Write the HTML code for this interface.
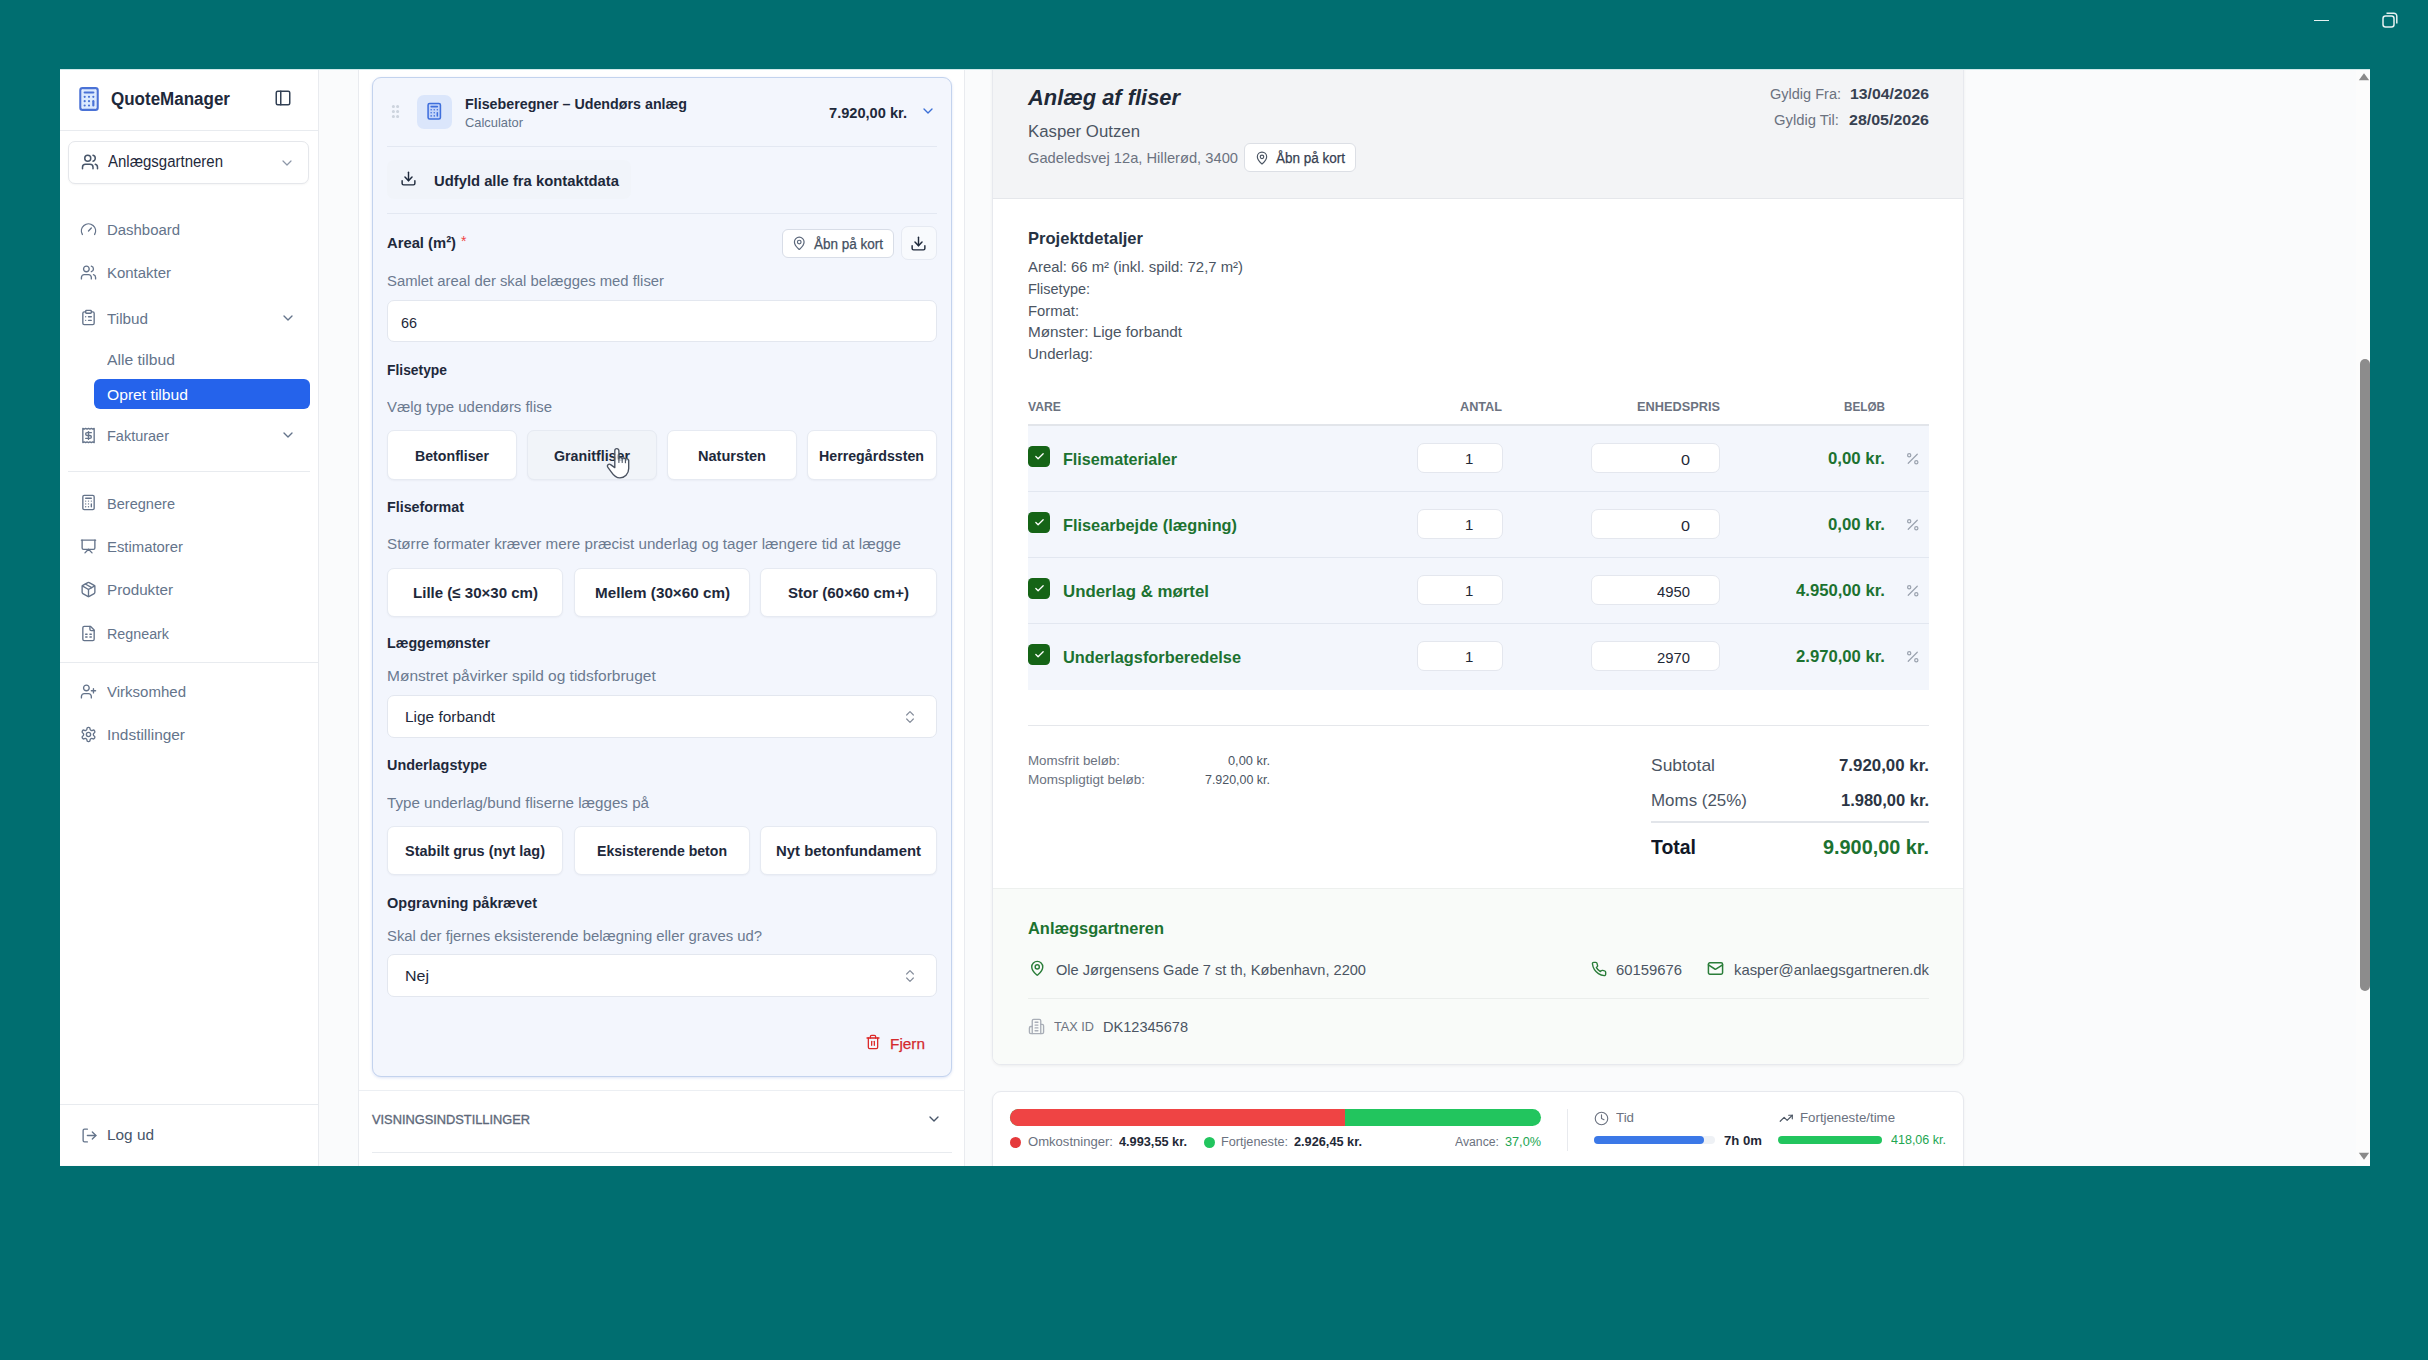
<!DOCTYPE html>
<html lang="da"><head><meta charset="utf-8"><title>QuoteManager</title>
<style>
html,body{margin:0;padding:0}
body{width:2428px;height:1360px;overflow:hidden;background:#006e70;font-family:"Liberation Sans", sans-serif;position:relative}
#win{position:absolute;left:60px;top:69px;width:2310px;height:1096.6px;overflow:hidden;background:#fafbfc}
#in{position:absolute;left:-60px;top:-69px;width:2428px;height:1360px}
.b{position:absolute;box-sizing:border-box;display:block}
.t{position:absolute;white-space:pre;transform-origin:0 50%;display:block}
</style></head><body>

<div class="b" style="left:2314px;top:19.5px;width:15px;height:1.6px;background:#e6f1f1"></div>
<svg class="b" style="left:2381px;top:11px" width="18" height="18" viewBox="0 0 18 18" fill="none" stroke="#e6f1f1" stroke-width="1.5">
<rect x="2" y="5" width="11" height="11" rx="2.5"/><path d="M5.5 2.2h7.3a3 3 0 0 1 3 3v7.3"/></svg>

<div id="win"><div id="in">
<div class="b" style="left:60px;top:69px;width:258px;height:1096px;background:#ffffff;"></div>
<div class="b" style="left:318px;top:69px;width:1px;height:1097px;background:#e9ebef"></div>
<div class="b" style="left:60px;top:130px;width:258px;height:1px;background:#e8ebef"></div>
<div class="b" style="left:81.500px;top:89px;width:14px;height:20px;background:#dceafe;border-radius:3px"></div>
<svg class="b" style="left:75.70px;top:85.80px;" width="26" height="26" viewBox="0 0 24 24" fill="none" stroke="#4a72d6" stroke-width="2" stroke-linecap="round" stroke-linejoin="round"><rect width="16" height="20" x="4" y="2" rx="2"/><line x1="8" x2="16" y1="6" y2="6"/><line x1="16" x2="16" y1="14" y2="18"/><path d="M16 10h.01"/><path d="M12 10h.01"/><path d="M8 10h.01"/><path d="M12 14h.01"/><path d="M8 14h.01"/><path d="M12 18h.01"/><path d="M8 18h.01"/></svg>
<span class="t" style="left:111.00px;top:86.98px;font-size:17.5px;line-height:24px;color:#1e293b;font-weight:700;transform:scaleX(0.9712);">QuoteManager</span>
<svg class="b" style="left:274.00px;top:89.00px;" width="18" height="18" viewBox="0 0 24 24" fill="none" stroke="#334155" stroke-width="2" stroke-linecap="round" stroke-linejoin="round"><rect width="18" height="18" x="3" y="3" rx="2"/><path d="M9 3v18"/></svg>
<div class="b" style="left:68px;top:140.5px;width:241px;height:43.0px;background:#fff;border:1px solid #e5e7eb;border-radius:7px;box-shadow:0 1px 2px rgba(0,0,0,.04);"></div>
<svg class="b" style="left:80.50px;top:153.00px;" width="18" height="18" viewBox="0 0 24 24" fill="none" stroke="#475569" stroke-width="2" stroke-linecap="round" stroke-linejoin="round"><path d="M16 21v-2a4 4 0 0 0-4-4H6a4 4 0 0 0-4 4v2"/><circle cx="9" cy="7" r="4"/><path d="M22 21v-2a4 4 0 0 0-3-3.87"/><path d="M16 3.13a4 4 0 0 1 0 7.75"/></svg>
<span class="t" style="left:108.00px;top:151.11px;font-size:16px;line-height:22px;color:#1e293b;transform:scaleX(0.9369);">Anlægsgartneren</span>
<svg class="b" style="left:279.00px;top:154.50px;" width="16" height="16" viewBox="0 0 24 24" fill="none" stroke="#8d97a8" stroke-width="1.8" stroke-linecap="round" stroke-linejoin="round"><path d="m6 9 6 6 6-6"/></svg>
<svg class="b" style="left:80.00px;top:220.80px;" width="17" height="17" viewBox="0 0 24 24" fill="none" stroke="#64738a" stroke-width="1.9" stroke-linecap="round" stroke-linejoin="round"><path d="m12 14 4-4"/><path d="M3.34 19a10 10 0 1 1 17.32 0"/></svg>
<span class="t" style="left:107.00px;top:219.15px;font-size:15.5px;line-height:22px;color:#64748b;transform:scaleX(0.9627);">Dashboard</span>
<svg class="b" style="left:80.00px;top:263.80px;" width="17" height="17" viewBox="0 0 24 24" fill="none" stroke="#64738a" stroke-width="1.9" stroke-linecap="round" stroke-linejoin="round"><path d="M16 21v-2a4 4 0 0 0-4-4H6a4 4 0 0 0-4 4v2"/><circle cx="9" cy="7" r="4"/><path d="M22 21v-2a4 4 0 0 0-3-3.87"/><path d="M16 3.13a4 4 0 0 1 0 7.75"/></svg>
<span class="t" style="left:107.00px;top:262.15px;font-size:15.5px;line-height:22px;color:#64748b;transform:scaleX(0.9644);">Kontakter</span>
<svg class="b" style="left:80.00px;top:309.00px;" width="17" height="17" viewBox="0 0 24 24" fill="none" stroke="#64738a" stroke-width="1.9" stroke-linecap="round" stroke-linejoin="round"><rect width="8" height="4" x="8" y="2" rx="1" ry="1"/><path d="M16 4h2a2 2 0 0 1 2 2v14a2 2 0 0 1-2 2H6a2 2 0 0 1-2-2V6a2 2 0 0 1 2-2h2"/><path d="M12 11h4"/><path d="M12 16h4"/><path d="M8 11h.01"/><path d="M8 16h.01"/></svg>
<span class="t" style="left:107.00px;top:308.15px;font-size:15.5px;line-height:22px;color:#64748b;transform:scaleX(0.9842);">Tilbud</span>
<svg class="b" style="left:280.00px;top:310.00px;" width="16" height="16" viewBox="0 0 24 24" fill="none" stroke="#64748b" stroke-width="2" stroke-linecap="round" stroke-linejoin="round"><path d="m6 9 6 6 6-6"/></svg>
<span class="t" style="left:107.00px;top:349.15px;font-size:15.5px;line-height:22px;color:#64748b;transform:scaleX(1.0116);">Alle tilbud</span>
<div class="b" style="left:93.5px;top:378.7px;width:216.0px;height:30.30000000000001px;background:#2563eb;border-radius:6px;"></div>
<span class="t" style="left:107.00px;top:384.15px;font-size:15.5px;line-height:22px;color:#ffffff;transform:scaleX(1.0107);">Opret tilbud</span>
<svg class="b" style="left:80.00px;top:426.80px;" width="17" height="17" viewBox="0 0 24 24" fill="none" stroke="#64738a" stroke-width="1.9" stroke-linecap="round" stroke-linejoin="round"><path d="M4 2v20l2-1 2 1 2-1 2 1 2-1 2 1 2-1 2 1V2l-2 1-2-1-2 1-2-1-2 1-2-1-2 1Z"/><path d="M16 8h-6a2 2 0 1 0 0 4h4a2 2 0 1 1 0 4H8"/><path d="M12 17.5v-11"/></svg>
<span class="t" style="left:107.00px;top:425.15px;font-size:15.5px;line-height:22px;color:#64748b;transform:scaleX(0.9345);">Fakturaer</span>
<svg class="b" style="left:280.00px;top:427.00px;" width="16" height="16" viewBox="0 0 24 24" fill="none" stroke="#64748b" stroke-width="2" stroke-linecap="round" stroke-linejoin="round"><path d="m6 9 6 6 6-6"/></svg>
<div class="b" style="left:67.5px;top:471px;width:242.0px;height:1px;background:#e8ebef"></div>
<svg class="b" style="left:80.00px;top:494.00px;" width="17" height="17" viewBox="0 0 24 24" fill="none" stroke="#64738a" stroke-width="1.9" stroke-linecap="round" stroke-linejoin="round"><rect width="16" height="20" x="4" y="2" rx="2"/><line x1="8" x2="16" y1="6" y2="6"/><line x1="16" x2="16" y1="14" y2="18"/><path d="M16 10h.01"/><path d="M12 10h.01"/><path d="M8 10h.01"/><path d="M12 14h.01"/><path d="M8 14h.01"/><path d="M12 18h.01"/><path d="M8 18h.01"/></svg>
<span class="t" style="left:107.00px;top:492.95px;font-size:15.5px;line-height:22px;color:#64748b;transform:scaleX(0.9393);">Beregnere</span>
<svg class="b" style="left:80.00px;top:537.80px;" width="17" height="17" viewBox="0 0 24 24" fill="none" stroke="#64738a" stroke-width="1.9" stroke-linecap="round" stroke-linejoin="round"><path d="M2 3h20"/><path d="M21 3v11a2 2 0 0 1-2 2H5a2 2 0 0 1-2-2V3"/><path d="m7 21 5-5 5 5"/></svg>
<span class="t" style="left:107.00px;top:536.15px;font-size:15.5px;line-height:22px;color:#64748b;transform:scaleX(0.9590);">Estimatorer</span>
<svg class="b" style="left:80.00px;top:580.80px;" width="17" height="17" viewBox="0 0 24 24" fill="none" stroke="#64738a" stroke-width="1.9" stroke-linecap="round" stroke-linejoin="round"><path d="m7.5 4.27 9 5.15"/><path d="M21 8a2 2 0 0 0-1-1.73l-7-4a2 2 0 0 0-2 0l-7 4A2 2 0 0 0 3 8v8a2 2 0 0 0 1 1.73l7 4a2 2 0 0 0 2 0l7-4A2 2 0 0 0 21 16Z"/><path d="m3.3 7 8.7 5 8.7-5"/><path d="M12 22V12"/></svg>
<span class="t" style="left:107.00px;top:579.15px;font-size:15.5px;line-height:22px;color:#64748b;transform:scaleX(0.9821);">Produkter</span>
<svg class="b" style="left:80.00px;top:624.80px;" width="17" height="17" viewBox="0 0 24 24" fill="none" stroke="#64738a" stroke-width="1.9" stroke-linecap="round" stroke-linejoin="round"><path d="M15 2H6a2 2 0 0 0-2 2v16a2 2 0 0 0 2 2h12a2 2 0 0 0 2-2V7Z"/><path d="M14 2v4a2 2 0 0 0 2 2h4"/><path d="M8 13h2"/><path d="M14 13h2"/><path d="M8 17h2"/><path d="M14 17h2"/></svg>
<span class="t" style="left:107.00px;top:623.15px;font-size:15.5px;line-height:22px;color:#64748b;transform:scaleX(0.9224);">Regneark</span>
<div class="b" style="left:60px;top:662px;width:258px;height:1px;background:#e8ebef"></div>
<svg class="b" style="left:80.00px;top:682.80px;" width="17" height="17" viewBox="0 0 24 24" fill="none" stroke="#64738a" stroke-width="1.9" stroke-linecap="round" stroke-linejoin="round"><path d="M16 21v-2a4 4 0 0 0-4-4H6a4 4 0 0 0-4 4v2"/><circle cx="9" cy="7" r="4"/><line x1="19" x2="19" y1="8" y2="14"/><line x1="22" x2="16" y1="11" y2="11"/></svg>
<span class="t" style="left:107.00px;top:681.15px;font-size:15.5px;line-height:22px;color:#64748b;transform:scaleX(0.9686);">Virksomhed</span>
<svg class="b" style="left:80.00px;top:725.80px;" width="17" height="17" viewBox="0 0 24 24" fill="none" stroke="#64738a" stroke-width="1.9" stroke-linecap="round" stroke-linejoin="round"><path d="M12.22 2h-.44a2 2 0 0 0-2 2v.18a2 2 0 0 1-1 1.73l-.43.25a2 2 0 0 1-2 0l-.15-.08a2 2 0 0 0-2.73.73l-.22.38a2 2 0 0 0 .73 2.73l.15.1a2 2 0 0 1 1 1.72v.51a2 2 0 0 1-1 1.74l-.15.09a2 2 0 0 0-.73 2.73l.22.38a2 2 0 0 0 2.73.73l.15-.08a2 2 0 0 1 2 0l.43.25a2 2 0 0 1 1 1.73V20a2 2 0 0 0 2 2h.44a2 2 0 0 0 2-2v-.18a2 2 0 0 1 1-1.73l.43-.25a2 2 0 0 1 2 0l.15.08a2 2 0 0 0 2.73-.73l.22-.39a2 2 0 0 0-.73-2.73l-.15-.08a2 2 0 0 1-1-1.74v-.5a2 2 0 0 1 1-1.74l.15-.09a2 2 0 0 0 .73-2.73l-.22-.38a2 2 0 0 0-2.73-.73l-.15.08a2 2 0 0 1-2 0l-.43-.25a2 2 0 0 1-1-1.73V4a2 2 0 0 0-2-2z"/><circle cx="12" cy="12" r="3"/></svg>
<span class="t" style="left:107.00px;top:724.15px;font-size:15.5px;line-height:22px;color:#64748b;transform:scaleX(0.9948);">Indstillinger</span>
<div class="b" style="left:60px;top:1104px;width:258px;height:1px;background:#e8ebef"></div>
<svg class="b" style="left:80.50px;top:1126.50px;" width="17" height="17" viewBox="0 0 24 24" fill="none" stroke="#64748b" stroke-width="1.9" stroke-linecap="round" stroke-linejoin="round"><path d="M9 21H5a2 2 0 0 1-2-2V5a2 2 0 0 1 2-2h4"/><polyline points="16 17 21 12 16 7"/><line x1="21" x2="9" y1="12" y2="12"/></svg>
<span class="t" style="left:107.00px;top:1124.15px;font-size:15.5px;line-height:22px;color:#475569;transform:scaleX(0.9911);">Log ud</span>
<div class="b" style="left:358px;top:69px;width:607px;height:1097px;background:#ffffff;border:1px solid #e9ebef;border-top:none;border-bottom:none;"></div>
<div class="b" style="left:372px;top:77px;width:580px;height:1000px;background:#f3f6fd;border:1px solid #c3d3ee;border-radius:9px;box-shadow:0 1px 3px rgba(59,100,200,.18);"></div>
<svg class="b" style="left:386.50px;top:103.00px;" width="17" height="17" viewBox="0 0 24 24" fill="none" stroke="#ccd3dd" stroke-width="2.4" stroke-linecap="round" stroke-linejoin="round"><circle cx="9" cy="12" r="1"/><circle cx="9" cy="5" r="1"/><circle cx="9" cy="19" r="1"/><circle cx="15" cy="12" r="1"/><circle cx="15" cy="5" r="1"/><circle cx="15" cy="19" r="1"/></svg>
<div class="b" style="left:417px;top:94.5px;width:34.5px;height:34.5px;background:#dbe6fb;border-radius:7px;"></div>
<svg class="b" style="left:424.75px;top:102.25px;" width="18.5" height="18.5" viewBox="0 0 24 24" fill="none" stroke="#3f6fdc" stroke-width="2" stroke-linecap="round" stroke-linejoin="round"><rect width="16" height="20" x="4" y="2" rx="2" fill="#c3d4fa"/><line x1="8" x2="16" y1="6" y2="6"/><line x1="16" x2="16" y1="14" y2="18"/><path d="M16 10h.01"/><path d="M12 10h.01"/><path d="M8 10h.01"/><path d="M12 14h.01"/><path d="M8 14h.01"/><path d="M12 18h.01"/><path d="M8 18h.01"/></svg>
<span class="t" style="left:465.00px;top:92.75px;font-size:15.5px;line-height:22px;color:#1e293b;font-weight:700;transform:scaleX(0.9204);">Fliseberegner – Udendørs anlæg</span>
<span class="t" style="left:465.00px;top:114.37px;font-size:13px;line-height:18px;color:#64748b;transform:scaleX(0.9909);">Calculator</span>
<span class="t" style="left:829.00px;top:101.69px;font-size:15px;line-height:21px;color:#1e293b;font-weight:700;transform:scaleX(0.9740);">7.920,00 kr.</span>
<svg class="b" style="left:920.00px;top:103.00px;" width="16" height="16" viewBox="0 0 24 24" fill="none" stroke="#3b6fd6" stroke-width="2" stroke-linecap="round" stroke-linejoin="round"><path d="m6 9 6 6 6-6"/></svg>
<div class="b" style="left:387px;top:146px;width:550px;height:1px;background:#e3e8f2"></div>
<div class="b" style="left:387px;top:160px;width:244px;height:38.5px;background:#f1f4fa;border-radius:7px;"></div>
<svg class="b" style="left:400.00px;top:170.00px;" width="17" height="17" viewBox="0 0 24 24" fill="none" stroke="#1e293b" stroke-width="2" stroke-linecap="round" stroke-linejoin="round"><path d="M21 15v4a2 2 0 0 1-2 2H5a2 2 0 0 1-2-2v-4"/><polyline points="7 10 12 15 17 10"/><line x1="12" x2="12" y1="15" y2="3"/></svg>
<span class="t" style="left:434.00px;top:169.65px;font-size:15.5px;line-height:22px;color:#1e293b;font-weight:700;transform:scaleX(0.9546);">Udfyld alle fra kontaktdata</span>
<div class="b" style="left:387px;top:213px;width:550px;height:1px;background:#e3e8f2"></div>
<span class="t" style="left:387.00px;top:232.15px;font-size:15.5px;line-height:22px;color:#1e293b;font-weight:700;transform:scaleX(0.9536);">Areal (m²)</span>
<span class="t" style="left:461.00px;top:231.28px;font-size:14px;line-height:20px;color:#ef4444;">*</span>
<div class="b" style="left:782px;top:229px;width:112px;height:29px;background:#ffffff;border:1px solid #d8dde7;border-radius:6px;"></div>
<svg class="b" style="left:791.75px;top:235.75px;" width="14.5" height="14.5" viewBox="0 0 24 24" fill="none" stroke="#5b677a" stroke-width="2" stroke-linecap="round" stroke-linejoin="round"><path d="M20 10c0 4.993-5.539 10.193-7.399 11.799a1 1 0 0 1-1.202 0C9.539 20.193 4 14.993 4 10a8 8 0 0 1 16 0"/><circle cx="12" cy="10" r="3"/></svg>
<span class="t" style="left:814.00px;top:234.28px;font-size:14px;line-height:20px;color:#434f61;-webkit-text-stroke:0.25px #434f61;transform:scaleX(0.9636);">Åbn på kort</span>
<div class="b" style="left:901px;top:226px;width:36px;height:34px;background:#f8fafd;border:1px solid #e6eaf2;border-radius:7px;"></div>
<svg class="b" style="left:909.80px;top:235.00px;" width="17" height="17" viewBox="0 0 24 24" fill="none" stroke="#1e293b" stroke-width="2" stroke-linecap="round" stroke-linejoin="round"><path d="M21 15v4a2 2 0 0 1-2 2H5a2 2 0 0 1-2-2v-4"/><polyline points="7 10 12 15 17 10"/><line x1="12" x2="12" y1="15" y2="3"/></svg>
<span class="t" style="left:387.00px;top:269.65px;font-size:15.5px;line-height:22px;color:#6b7a90;transform:scaleX(0.9569);">Samlet areal der skal belægges med fliser</span>
<div class="b" style="left:387px;top:299.7px;width:550px;height:42.60000000000002px;background:#ffffff;border:1px solid #e3e7ef;border-radius:7px;"></div>
<span class="t" style="left:401.00px;top:312.15px;font-size:15.5px;line-height:22px;color:#1e293b;transform:scaleX(0.9275);">66</span>
<span class="t" style="left:387.00px;top:359.15px;font-size:15.5px;line-height:22px;color:#1e293b;font-weight:700;transform:scaleX(0.8928);">Flisetype</span>
<span class="t" style="left:387.00px;top:396.15px;font-size:15.5px;line-height:22px;color:#6b7a90;transform:scaleX(0.9624);">Vælg type udendørs flise</span>
<div class="b" style="left:387px;top:430px;width:130px;height:50px;background:#ffffff;border:1px solid #e6eaf2;border-radius:7px;box-shadow:0 1px 2px rgba(15,23,42,.04);"></div>
<span class="t" style="left:415.00px;top:444.65px;font-size:15.5px;line-height:22px;color:#1e293b;font-weight:700;transform:scaleX(0.9139);">Betonfliser</span>
<div class="b" style="left:527px;top:430px;width:130px;height:50px;background:#f1f4f9;border:1px solid #e6eaf2;border-radius:7px;box-shadow:0 1px 2px rgba(15,23,42,.04);"></div>
<span class="t" style="left:554.00px;top:444.65px;font-size:15.5px;line-height:22px;color:#1e293b;font-weight:700;transform:scaleX(0.9189);">Granitfliser</span>
<div class="b" style="left:667px;top:430px;width:130px;height:50px;background:#ffffff;border:1px solid #e6eaf2;border-radius:7px;box-shadow:0 1px 2px rgba(15,23,42,.04);"></div>
<span class="t" style="left:698.00px;top:444.65px;font-size:15.5px;line-height:22px;color:#1e293b;font-weight:700;transform:scaleX(0.9398);">Natursten</span>
<div class="b" style="left:807px;top:430px;width:130px;height:50px;background:#ffffff;border:1px solid #e6eaf2;border-radius:7px;box-shadow:0 1px 2px rgba(15,23,42,.04);"></div>
<span class="t" style="left:819.00px;top:444.65px;font-size:15.5px;line-height:22px;color:#1e293b;font-weight:700;transform:scaleX(0.9164);">Herregårdssten</span>
<span class="t" style="left:387.00px;top:496.15px;font-size:15.5px;line-height:22px;color:#1e293b;font-weight:700;transform:scaleX(0.9215);">Fliseformat</span>
<span class="t" style="left:387.00px;top:533.15px;font-size:15.5px;line-height:22px;color:#6b7a90;transform:scaleX(0.9797);">Større formater kræver mere præcist underlag og tager længere tid at lægge</span>
<div class="b" style="left:387px;top:567.5px;width:176px;height:49.5px;background:#ffffff;border:1px solid #e6eaf2;border-radius:7px;box-shadow:0 1px 2px rgba(15,23,42,.04);"></div>
<span class="t" style="left:413.00px;top:581.90px;font-size:15.5px;line-height:22px;color:#1e293b;font-weight:700;transform:scaleX(0.9712);">Lille (≤ 30×30 cm)</span>
<div class="b" style="left:574px;top:567.5px;width:176px;height:49.5px;background:#ffffff;border:1px solid #e6eaf2;border-radius:7px;box-shadow:0 1px 2px rgba(15,23,42,.04);"></div>
<span class="t" style="left:595.00px;top:581.90px;font-size:15.5px;line-height:22px;color:#1e293b;font-weight:700;transform:scaleX(0.9824);">Mellem (30×60 cm)</span>
<div class="b" style="left:760px;top:567.5px;width:177px;height:49.5px;background:#ffffff;border:1px solid #e6eaf2;border-radius:7px;box-shadow:0 1px 2px rgba(15,23,42,.04);"></div>
<span class="t" style="left:788.00px;top:581.90px;font-size:15.5px;line-height:22px;color:#1e293b;font-weight:700;transform:scaleX(0.9685);">Stor (60×60 cm+)</span>
<span class="t" style="left:387.00px;top:632.15px;font-size:15.5px;line-height:22px;color:#1e293b;font-weight:700;transform:scaleX(0.9199);">Læggemønster</span>
<span class="t" style="left:387.00px;top:665.15px;font-size:15.5px;line-height:22px;color:#6b7a90;">Mønstret påvirker spild og tidsforbruget</span>
<div class="b" style="left:387px;top:695px;width:550px;height:43px;background:#ffffff;border:1px solid #e3e7ef;border-radius:7px;"></div>
<span class="t" style="left:405.00px;top:706.15px;font-size:15.5px;line-height:22px;color:#1e293b;transform:scaleX(0.9945);">Lige forbandt</span>
<svg class="b" style="left:902.00px;top:709.00px;" width="16" height="16" viewBox="0 0 24 24" fill="none" stroke="#858d9b" stroke-width="1.8" stroke-linecap="round" stroke-linejoin="round"><path d="m7 15 5 5 5-5"/><path d="m7 9 5-5 5 5"/></svg>
<span class="t" style="left:387.00px;top:754.15px;font-size:15.5px;line-height:22px;color:#1e293b;font-weight:700;transform:scaleX(0.9287);">Underlagstype</span>
<span class="t" style="left:387.00px;top:792.15px;font-size:15.5px;line-height:22px;color:#6b7a90;transform:scaleX(0.9776);">Type underlag/bund fliserne lægges på</span>
<div class="b" style="left:387px;top:825.7px;width:176px;height:49.299999999999955px;background:#ffffff;border:1px solid #e6eaf2;border-radius:7px;box-shadow:0 1px 2px rgba(15,23,42,.04);"></div>
<span class="t" style="left:405.00px;top:840.00px;font-size:15.5px;line-height:22px;color:#1e293b;font-weight:700;transform:scaleX(0.9343);">Stabilt grus (nyt lag)</span>
<div class="b" style="left:574px;top:825.7px;width:176px;height:49.299999999999955px;background:#ffffff;border:1px solid #e6eaf2;border-radius:7px;box-shadow:0 1px 2px rgba(15,23,42,.04);"></div>
<span class="t" style="left:597.00px;top:840.00px;font-size:15.5px;line-height:22px;color:#1e293b;font-weight:700;transform:scaleX(0.9091);">Eksisterende beton</span>
<div class="b" style="left:760px;top:825.7px;width:177px;height:49.299999999999955px;background:#ffffff;border:1px solid #e6eaf2;border-radius:7px;box-shadow:0 1px 2px rgba(15,23,42,.04);"></div>
<span class="t" style="left:776.00px;top:840.00px;font-size:15.5px;line-height:22px;color:#1e293b;font-weight:700;transform:scaleX(0.9623);">Nyt betonfundament</span>
<span class="t" style="left:387.00px;top:892.15px;font-size:15.5px;line-height:22px;color:#1e293b;font-weight:700;transform:scaleX(0.9362);">Opgravning påkrævet</span>
<span class="t" style="left:387.00px;top:925.15px;font-size:15.5px;line-height:22px;color:#6b7a90;transform:scaleX(0.9587);">Skal der fjernes eksisterende belægning eller graves ud?</span>
<div class="b" style="left:387px;top:954px;width:550px;height:43px;background:#ffffff;border:1px solid #e3e7ef;border-radius:7px;"></div>
<span class="t" style="left:405.00px;top:965.15px;font-size:15.5px;line-height:22px;color:#1e293b;transform:scaleX(1.0316);">Nej</span>
<svg class="b" style="left:902.00px;top:967.50px;" width="16" height="16" viewBox="0 0 24 24" fill="none" stroke="#858d9b" stroke-width="1.8" stroke-linecap="round" stroke-linejoin="round"><path d="m7 15 5 5 5-5"/><path d="m7 9 5-5 5 5"/></svg>
<svg class="b" style="left:865.00px;top:1034.00px;" width="16" height="16" viewBox="0 0 24 24" fill="none" stroke="#dc2626" stroke-width="1.9" stroke-linecap="round" stroke-linejoin="round"><path d="M3 6h18"/><path d="M19 6v14c0 1-1 2-2 2H7c-1 0-2-1-2-2V6"/><path d="M8 6V4c0-1 1-2 2-2h4c1 0 2 1 2 2v2"/><line x1="10" x2="10" y1="11" y2="17"/><line x1="14" x2="14" y1="11" y2="17"/></svg>
<span class="t" style="left:890.00px;top:1032.65px;font-size:15.5px;line-height:22px;color:#d42a2e;-webkit-text-stroke:0.25px #d42a2e;transform:scaleX(0.9907);">Fjern</span>
<div class="b" style="left:359px;top:1090px;width:606px;height:1px;background:#eceff3"></div>
<span class="t" style="left:372.00px;top:1110.87px;font-size:13px;line-height:18px;color:#5d6879;-webkit-text-stroke:0.35px #5d6879;transform:scaleX(0.9852);">VISNINGSINDSTILLINGER</span>
<svg class="b" style="left:926.00px;top:1111.00px;" width="16" height="16" viewBox="0 0 24 24" fill="none" stroke="#475569" stroke-width="2" stroke-linecap="round" stroke-linejoin="round"><path d="m6 9 6 6 6-6"/></svg>
<div class="b" style="left:372px;top:1152px;width:580px;height:1px;background:#e8ebef"></div>
<div class="b" style="left:992px;top:40px;width:972px;height:1025px;background:#ffffff;border:1px solid #e7e9ee;border-radius:9px;box-shadow:0 1px 3px rgba(0,0,0,.06);overflow:hidden;"></div>
<div class="b" style="left:993px;top:69px;width:970px;height:129px;background:#f3f4f6;"></div>
<div class="b" style="left:993px;top:198px;width:970px;height:1px;background:#e5e7eb"></div>
<span class="t" style="left:1028.00px;top:82.63px;font-size:21.5px;line-height:30px;color:#1f2937;font-weight:700;font-style:italic;transform:scaleX(1.0178);">Anlæg af fliser</span>
<span class="t" style="left:1028.00px;top:119.58px;font-size:16.3px;line-height:23px;color:#4b5563;transform:scaleX(1.0312);">Kasper Outzen</span>
<span class="t" style="left:1028.00px;top:146.89px;font-size:15px;line-height:21px;color:#6b7280;transform:scaleX(0.9799);">Gadeledsvej 12a, Hillerød, 3400</span>
<div class="b" style="left:1244px;top:143px;width:112px;height:29px;background:#ffffff;border:1px solid #dcdfe5;border-radius:6px;"></div>
<svg class="b" style="left:1254.50px;top:150.50px;" width="14" height="14" viewBox="0 0 24 24" fill="none" stroke="#4b5563" stroke-width="2" stroke-linecap="round" stroke-linejoin="round"><path d="M20 10c0 4.993-5.539 10.193-7.399 11.799a1 1 0 0 1-1.202 0C9.539 20.193 4 14.993 4 10a8 8 0 0 1 16 0"/><circle cx="12" cy="10" r="3"/></svg>
<span class="t" style="left:1276.00px;top:148.28px;font-size:14px;line-height:20px;color:#374151;-webkit-text-stroke:0.25px #374151;transform:scaleX(0.9636);">Åbn på kort</span>
<span class="t" style="left:1770.00px;top:83.15px;font-size:15.5px;line-height:22px;color:#6b7280;transform:scaleX(0.9365);">Gyldig Fra:</span>
<span class="t" style="left:1850.00px;top:83.15px;font-size:15.5px;line-height:22px;color:#374151;font-weight:700;transform:scaleX(1.0183);">13/04/2026</span>
<span class="t" style="left:1774.00px;top:109.15px;font-size:15.5px;line-height:22px;color:#6b7280;transform:scaleX(0.9550);">Gyldig Til:</span>
<span class="t" style="left:1849.00px;top:109.15px;font-size:15.5px;line-height:22px;color:#374151;font-weight:700;transform:scaleX(1.0312);">28/05/2026</span>
<span class="t" style="left:1028.00px;top:226.56px;font-size:16.5px;line-height:23px;color:#263243;font-weight:700;transform:scaleX(1.0031);">Projektdetaljer</span>
<span class="t" style="left:1028.00px;top:257.24px;font-size:14.5px;line-height:20px;color:#4b5563;transform:scaleX(1.0262);">Areal: 66 m² (inkl. spild: 72,7 m²)</span>
<span class="t" style="left:1028.00px;top:279.24px;font-size:14.5px;line-height:20px;color:#4b5563;">Flisetype:</span>
<span class="t" style="left:1028.00px;top:301.24px;font-size:14.5px;line-height:20px;color:#4b5563;transform:scaleX(1.0210);">Format:</span>
<span class="t" style="left:1028.00px;top:322.24px;font-size:14.5px;line-height:20px;color:#4b5563;transform:scaleX(1.0556);">Mønster: Lige forbandt</span>
<span class="t" style="left:1028.00px;top:344.24px;font-size:14.5px;line-height:20px;color:#4b5563;transform:scaleX(1.0338);">Underlag:</span>
<span class="t" style="left:1028.00px;top:398.17px;font-size:13px;line-height:18px;color:#6b7280;font-weight:700;transform:scaleX(0.9387);">VARE</span>
<span class="t" style="left:1460.00px;top:398.17px;font-size:13px;line-height:18px;color:#6b7280;font-weight:700;transform:scaleX(0.9746);">ANTAL</span>
<span class="t" style="left:1637.00px;top:398.17px;font-size:13px;line-height:18px;color:#6b7280;font-weight:700;transform:scaleX(0.9819);">ENHEDSPRIS</span>
<span class="t" style="left:1844.00px;top:398.17px;font-size:13px;line-height:18px;color:#6b7280;font-weight:700;transform:scaleX(0.9011);">BELØB</span>
<div class="b" style="left:1028px;top:424px;width:901px;height:2px;background:#e2e5ea"></div>
<div class="b" style="left:1028px;top:426px;width:901px;height:264px;background:#f3f6fc;"></div>
<div class="b" style="left:1028px;top:491px;width:901px;height:1px;background:#e2e7f0"></div>
<div class="b" style="left:1028px;top:557px;width:901px;height:1px;background:#e2e7f0"></div>
<div class="b" style="left:1028px;top:623px;width:901px;height:1px;background:#e2e7f0"></div>
<div class="b" style="left:1028px;top:445.5px;width:22px;height:21.69999999999999px;background:#156416;border-radius:4.5px;"></div>
<svg class="b" style="left:1033.50px;top:450.80px;" width="11" height="11" viewBox="0 0 24 24" fill="none" stroke="#ffffff" stroke-width="2.8" stroke-linecap="round" stroke-linejoin="round"><path d="M20 6 9 17l-5-5"/></svg>
<span class="t" style="left:1063.00px;top:447.56px;font-size:16.5px;line-height:23px;color:#1c7230;font-weight:700;transform:scaleX(0.9787);">Flisematerialer</span>
<div class="b" style="left:1417px;top:443.0px;width:86px;height:29.5px;background:#ffffff;border:1px solid #e4e7ee;border-radius:7px;"></div>
<span class="t" style="left:1465.00px;top:447.89px;font-size:15px;line-height:21px;color:#1f2937;">1</span>
<div class="b" style="left:1591px;top:443.0px;width:129px;height:29.5px;background:#ffffff;border:1px solid #e4e7ee;border-radius:7px;"></div>
<span class="t" style="left:1681.00px;top:448.69px;font-size:15px;line-height:21px;color:#1f2937;transform:scaleX(1.0787);">0</span>
<span class="t" style="left:1828.00px;top:448.11px;font-size:16px;line-height:22px;color:#1c7230;font-weight:700;transform:scaleX(1.0501);">0,00 kr.</span>
<svg class="b" style="left:1905.25px;top:450.75px;" width="15.5" height="15.5" viewBox="0 0 24 24" fill="none" stroke="#9ba3af" stroke-width="1.9" stroke-linecap="round" stroke-linejoin="round"><line x1="19" x2="5" y1="5" y2="19"/><circle cx="6.5" cy="6.5" r="2.5"/><circle cx="17.5" cy="17.5" r="2.5"/></svg>
<div class="b" style="left:1028px;top:511.5px;width:22px;height:21.700000000000045px;background:#156416;border-radius:4.5px;"></div>
<svg class="b" style="left:1033.50px;top:516.80px;" width="11" height="11" viewBox="0 0 24 24" fill="none" stroke="#ffffff" stroke-width="2.8" stroke-linecap="round" stroke-linejoin="round"><path d="M20 6 9 17l-5-5"/></svg>
<span class="t" style="left:1063.00px;top:513.56px;font-size:16.5px;line-height:23px;color:#1c7230;font-weight:700;transform:scaleX(0.9885);">Flisearbejde (lægning)</span>
<div class="b" style="left:1417px;top:509.0px;width:86px;height:29.5px;background:#ffffff;border:1px solid #e4e7ee;border-radius:7px;"></div>
<span class="t" style="left:1465.00px;top:513.90px;font-size:15px;line-height:21px;color:#1f2937;">1</span>
<div class="b" style="left:1591px;top:509.0px;width:129px;height:29.5px;background:#ffffff;border:1px solid #e4e7ee;border-radius:7px;"></div>
<span class="t" style="left:1681.00px;top:514.70px;font-size:15px;line-height:21px;color:#1f2937;transform:scaleX(1.0787);">0</span>
<span class="t" style="left:1828.00px;top:514.11px;font-size:16px;line-height:22px;color:#1c7230;font-weight:700;transform:scaleX(1.0501);">0,00 kr.</span>
<svg class="b" style="left:1905.25px;top:516.75px;" width="15.5" height="15.5" viewBox="0 0 24 24" fill="none" stroke="#9ba3af" stroke-width="1.9" stroke-linecap="round" stroke-linejoin="round"><line x1="19" x2="5" y1="5" y2="19"/><circle cx="6.5" cy="6.5" r="2.5"/><circle cx="17.5" cy="17.5" r="2.5"/></svg>
<div class="b" style="left:1028px;top:577.5px;width:22px;height:21.700000000000045px;background:#156416;border-radius:4.5px;"></div>
<svg class="b" style="left:1033.50px;top:582.80px;" width="11" height="11" viewBox="0 0 24 24" fill="none" stroke="#ffffff" stroke-width="2.8" stroke-linecap="round" stroke-linejoin="round"><path d="M20 6 9 17l-5-5"/></svg>
<span class="t" style="left:1063.00px;top:579.56px;font-size:16.5px;line-height:23px;color:#1c7230;font-weight:700;transform:scaleX(1.0208);">Underlag &amp; mørtel</span>
<div class="b" style="left:1417px;top:575.0px;width:86px;height:29.5px;background:#ffffff;border:1px solid #e4e7ee;border-radius:7px;"></div>
<span class="t" style="left:1465.00px;top:579.90px;font-size:15px;line-height:21px;color:#1f2937;">1</span>
<div class="b" style="left:1591px;top:575.0px;width:129px;height:29.5px;background:#ffffff;border:1px solid #e4e7ee;border-radius:7px;"></div>
<span class="t" style="left:1657.00px;top:580.70px;font-size:15px;line-height:21px;color:#1f2937;transform:scaleX(0.9888);">4950</span>
<span class="t" style="left:1796.00px;top:580.11px;font-size:16px;line-height:22px;color:#1c7230;font-weight:700;transform:scaleX(1.0419);">4.950,00 kr.</span>
<svg class="b" style="left:1905.25px;top:582.75px;" width="15.5" height="15.5" viewBox="0 0 24 24" fill="none" stroke="#9ba3af" stroke-width="1.9" stroke-linecap="round" stroke-linejoin="round"><line x1="19" x2="5" y1="5" y2="19"/><circle cx="6.5" cy="6.5" r="2.5"/><circle cx="17.5" cy="17.5" r="2.5"/></svg>
<div class="b" style="left:1028px;top:643.5px;width:22px;height:21.700000000000045px;background:#156416;border-radius:4.5px;"></div>
<svg class="b" style="left:1033.50px;top:648.80px;" width="11" height="11" viewBox="0 0 24 24" fill="none" stroke="#ffffff" stroke-width="2.8" stroke-linecap="round" stroke-linejoin="round"><path d="M20 6 9 17l-5-5"/></svg>
<span class="t" style="left:1063.00px;top:645.56px;font-size:16.5px;line-height:23px;color:#1c7230;font-weight:700;transform:scaleX(0.9904);">Underlagsforberedelse</span>
<div class="b" style="left:1417px;top:641.0px;width:86px;height:29.5px;background:#ffffff;border:1px solid #e4e7ee;border-radius:7px;"></div>
<span class="t" style="left:1465.00px;top:645.90px;font-size:15px;line-height:21px;color:#1f2937;">1</span>
<div class="b" style="left:1591px;top:641.0px;width:129px;height:29.5px;background:#ffffff;border:1px solid #e4e7ee;border-radius:7px;"></div>
<span class="t" style="left:1657.00px;top:646.70px;font-size:15px;line-height:21px;color:#1f2937;transform:scaleX(0.9888);">2970</span>
<span class="t" style="left:1796.00px;top:646.11px;font-size:16px;line-height:22px;color:#1c7230;font-weight:700;transform:scaleX(1.0419);">2.970,00 kr.</span>
<svg class="b" style="left:1905.25px;top:648.75px;" width="15.5" height="15.5" viewBox="0 0 24 24" fill="none" stroke="#9ba3af" stroke-width="1.9" stroke-linecap="round" stroke-linejoin="round"><line x1="19" x2="5" y1="5" y2="19"/><circle cx="6.5" cy="6.5" r="2.5"/><circle cx="17.5" cy="17.5" r="2.5"/></svg>
<div class="b" style="left:1028px;top:725px;width:901px;height:1px;background:#e5e7eb"></div>
<span class="t" style="left:1028.00px;top:751.91px;font-size:12.5px;line-height:18px;color:#6b7280;transform:scaleX(1.0680);">Momsfrit beløb:</span>
<span class="t" style="left:1228.00px;top:751.91px;font-size:12.5px;line-height:18px;color:#4b5563;transform:scaleX(1.0244);">0,00 kr.</span>
<span class="t" style="left:1028.00px;top:771.21px;font-size:12.5px;line-height:18px;color:#6b7280;transform:scaleX(1.0796);">Momspligtigt beløb:</span>
<span class="t" style="left:1205.00px;top:771.21px;font-size:12.5px;line-height:18px;color:#4b5563;transform:scaleX(0.9950);">7.920,00 kr.</span>
<span class="t" style="left:1651.00px;top:753.52px;font-size:17px;line-height:24px;color:#4b5563;transform:scaleX(1.0258);">Subtotal</span>
<span class="t" style="left:1839.00px;top:754.06px;font-size:16.5px;line-height:23px;color:#2b3544;font-weight:700;transform:scaleX(1.0216);">7.920,00 kr.</span>
<span class="t" style="left:1651.00px;top:788.52px;font-size:17px;line-height:24px;color:#4b5563;transform:scaleX(0.9963);">Moms (25%)</span>
<span class="t" style="left:1841.00px;top:789.06px;font-size:16.5px;line-height:23px;color:#2b3544;font-weight:700;">1.980,00 kr.</span>
<div class="b" style="left:1651px;top:821px;width:278px;height:2px;background:#e2e5ea"></div>
<span class="t" style="left:1651.00px;top:832.22px;font-size:20.5px;line-height:29px;color:#111827;font-weight:700;transform:scaleX(0.9483);">Total</span>
<span class="t" style="left:1823.00px;top:832.76px;font-size:20px;line-height:28px;color:#1c7230;font-weight:700;transform:scaleX(0.9927);">9.900,00 kr.</span>
<div class="b" style="left:993px;top:888px;width:970px;height:176px;background:#f9fbf9;border-radius:0 0 8px 8px;"></div>
<div class="b" style="left:993px;top:888px;width:970px;height:1px;background:#edf0ee"></div>
<span class="t" style="left:1028.00px;top:916.56px;font-size:16.5px;line-height:23px;color:#1c7230;font-weight:700;transform:scaleX(0.9955);">Anlægsgartneren</span>
<svg class="b" style="left:1028.75px;top:960.05px;" width="16.5" height="16.5" viewBox="0 0 24 24" fill="none" stroke="#2a7d39" stroke-width="2.1" stroke-linecap="round" stroke-linejoin="round"><path d="M20 10c0 4.993-5.539 10.193-7.399 11.799a1 1 0 0 1-1.202 0C9.539 20.193 4 14.993 4 10a8 8 0 0 1 16 0"/><circle cx="12" cy="10" r="3"/></svg>
<span class="t" style="left:1056.00px;top:958.70px;font-size:15px;line-height:21px;color:#4b5563;transform:scaleX(0.9732);">Ole Jørgensens Gade 7 st th, København, 2200</span>
<svg class="b" style="left:1590.50px;top:960.50px;" width="16" height="16" viewBox="0 0 24 24" fill="none" stroke="#2a7d39" stroke-width="2.1" stroke-linecap="round" stroke-linejoin="round"><path d="M22 16.92v3a2 2 0 0 1-2.18 2 19.79 19.79 0 0 1-8.63-3.07 19.5 19.5 0 0 1-6-6 19.79 19.79 0 0 1-3.07-8.67A2 2 0 0 1 4.11 2h3a2 2 0 0 1 2 1.72 12.84 12.84 0 0 0 .7 2.81 2 2 0 0 1-.45 2.11L8.09 9.91a16 16 0 0 0 6 6l1.27-1.27a2 2 0 0 1 2.11-.45 12.84 12.84 0 0 0 2.81.7A2 2 0 0 1 22 16.92z"/></svg>
<span class="t" style="left:1616.00px;top:958.70px;font-size:15px;line-height:21px;color:#4b5563;transform:scaleX(0.9888);">60159676</span>
<svg class="b" style="left:1707.00px;top:960.00px;" width="17" height="17" viewBox="0 0 24 24" fill="none" stroke="#2a7d39" stroke-width="2.1" stroke-linecap="round" stroke-linejoin="round"><rect width="20" height="16" x="2" y="4" rx="2"/><path d="m22 7-8.97 5.7a1.94 1.94 0 0 1-2.06 0L2 7"/></svg>
<span class="t" style="left:1734.00px;top:958.70px;font-size:15px;line-height:21px;color:#4b5563;transform:scaleX(0.9898);">kasper@anlaegsgartneren.dk</span>
<div class="b" style="left:1028px;top:998px;width:901px;height:1px;background:#ebeeec"></div>
<svg class="b" style="left:1028.30px;top:1017.50px;" width="17" height="17" viewBox="0 0 24 24" fill="none" stroke="#a9aeb7" stroke-width="1.9" stroke-linecap="round" stroke-linejoin="round"><path d="M6 22V4a2 2 0 0 1 2-2h8a2 2 0 0 1 2 2v18Z"/><path d="M6 12H4a2 2 0 0 0-2 2v6a2 2 0 0 0 2 2h2"/><path d="M18 9h2a2 2 0 0 1 2 2v9a2 2 0 0 1-2 2h-2"/><path d="M10 6h4"/><path d="M10 10h4"/><path d="M10 14h4"/><path d="M10 18h4"/></svg>
<span class="t" style="left:1054.00px;top:1018.41px;font-size:12.5px;line-height:18px;color:#6b7280;transform:scaleX(1.0163);">TAX ID</span>
<span class="t" style="left:1103.00px;top:1017.24px;font-size:14.5px;line-height:20px;color:#4b5563;transform:scaleX(1.0039);">DK12345678</span>
<div class="b" style="left:992px;top:1091px;width:972px;height:109px;background:#ffffff;border:1px solid #e7e9ee;border-radius:9px;box-shadow:0 1px 3px rgba(0,0,0,.05);"></div>
<div class="b" style="left:1010px;top:1109px;width:531px;height:17px;background:#22c55e;border-radius:9px;"></div>
<div class="b" style="left:1010px;top:1109px;width:335px;height:17px;background:#ef4444;border-radius:9px 0 0 9px;"></div>
<div class="b" style="left:1010px;top:1136.5px;width:11px;height:11.0px;background:#e5393b;border-radius:6px;"></div>
<span class="t" style="left:1028.00px;top:1133.41px;font-size:12.5px;line-height:18px;color:#6b7280;transform:scaleX(1.0458);">Omkostninger:</span>
<span class="t" style="left:1119.00px;top:1133.41px;font-size:12.5px;line-height:18px;color:#1f2937;font-weight:700;transform:scaleX(1.0190);">4.993,55 kr.</span>
<div class="b" style="left:1204px;top:1136.5px;width:11px;height:11.0px;background:#22c55e;border-radius:6px;"></div>
<span class="t" style="left:1221.00px;top:1133.41px;font-size:12.5px;line-height:18px;color:#6b7280;transform:scaleX(1.0149);">Fortjeneste:</span>
<span class="t" style="left:1294.00px;top:1133.41px;font-size:12.5px;line-height:18px;color:#1f2937;font-weight:700;transform:scaleX(1.0190);">2.926,45 kr.</span>
<span class="t" style="left:1455.00px;top:1133.41px;font-size:12.5px;line-height:18px;color:#6b7280;transform:scaleX(0.9788);">Avance:</span>
<span class="t" style="left:1505.00px;top:1133.41px;font-size:12.5px;line-height:18px;color:#22a652;transform:scaleX(1.0154);">37,0%</span>
<div class="b" style="left:1567px;top:1109px;width:1px;height:42px;background:#e8eaee"></div>
<svg class="b" style="left:1593.50px;top:1111.10px;" width="15" height="15" viewBox="0 0 24 24" fill="none" stroke="#6b7280" stroke-width="1.8" stroke-linecap="round" stroke-linejoin="round"><circle cx="12" cy="12" r="10"/><polyline points="12 6 12 12 16 14"/></svg>
<span class="t" style="left:1616.00px;top:1109.37px;font-size:13px;line-height:18px;color:#6b7280;transform:scaleX(1.0240);">Tid</span>
<div class="b" style="left:1594px;top:1136px;width:121px;height:8px;background:#eef1f5;border-radius:4px;"></div>
<div class="b" style="left:1594px;top:1136px;width:110px;height:8px;background:#3b78e7;border-radius:4px;"></div>
<span class="t" style="left:1724.00px;top:1130.83px;font-size:13.5px;line-height:19px;color:#1f2937;font-weight:700;transform:scaleX(0.9736);">7h 0m</span>
<svg class="b" style="left:1778.75px;top:1111.25px;" width="14.5" height="14.5" viewBox="0 0 24 24" fill="none" stroke="#4b5563" stroke-width="1.9" stroke-linecap="round" stroke-linejoin="round"><polyline points="22 7 13.5 15.5 8.5 10.5 2 17"/><polyline points="16 7 22 7 22 13"/></svg>
<span class="t" style="left:1800.00px;top:1109.37px;font-size:13px;line-height:18px;color:#6b7280;transform:scaleX(1.0193);">Fortjeneste/time</span>
<div class="b" style="left:1778px;top:1136px;width:104px;height:8px;background:#22c55e;border-radius:4px;"></div>
<span class="t" style="left:1891.00px;top:1131.37px;font-size:13px;line-height:18px;color:#22a652;transform:scaleX(0.9631);">418,06 kr.</span>
<div class="b" style="left:2356px;top:69px;width:14px;height:1096px;background:#fcfcfc;"></div>
<div class="b" style="left:2360px;top:359px;width:10px;height:632px;background:#8c8c8c;border-radius:5px;"></div>
<svg class="b" style="left:2358px;top:72px" width="12" height="9" viewBox="0 0 12 9"><path d="M6 1.200 11.200 8.200H.8z" fill="#8a8a8a"/></svg>
<svg class="b" style="left:2358px;top:1152px" width="12" height="9" viewBox="0 0 12 9"><path d="M6 7.800 11.200.8H.8z" fill="#8a8a8a"/></svg>
<div class="b" style="left:60px;top:69px;width:2310px;height:1px;background:#cfe9ea"></div>
</div></div>

<svg class="b" style="left:606px;top:447px" width="26" height="34" viewBox="0 0 26 34" fill="url(#cg)" stroke="#4a5260" stroke-width="1.35" stroke-linejoin="round" stroke-linecap="round">
<defs><linearGradient id="cg" x1="0" y1="0" x2="0" y2="1"><stop offset="0" stop-color="#fff" stop-opacity=".55"/><stop offset=".38" stop-color="#fff" stop-opacity=".7"/><stop offset=".55" stop-color="#fff" stop-opacity="1"/></linearGradient></defs>
<path d="M8.800 20.600V3.700a2.050 2.050 0 0 1 4.100 0V11.200q1.700-1.400 3.300.2 1.700-1.100 3.200.5 2-.9 3.300 1.200V21.500C22.700 27 18.600 30.900 13.900 30.900 9.500 30.900 7.200 27.800 5.200 24.800L1.900 20.300C.5 18.300 2.700 16.300 4.600 17.600Z"/>
<path d="M12.900 11.200v4.200M16.200 11.600v3.900M19.400 12.100v3.600" fill="none" stroke-width="1.1"/>
</svg>
</body></html>
